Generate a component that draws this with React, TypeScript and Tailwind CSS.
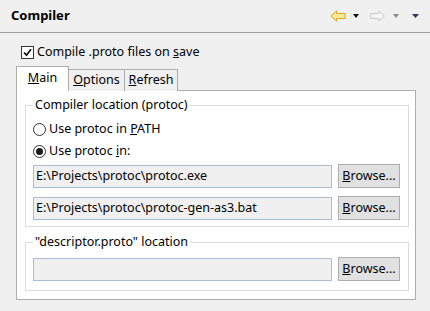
import React, { useState } from 'react';

const font = { fontFamily: '"Noto Sans", "Open Sans", Arial, sans-serif' };

const ArrowLeft: React.FC<{ active?: boolean }> = ({ active }) => (
  <svg width="16" height="12" viewBox="0 0 16 12">
    <polygon
      points="0.8,6 6.5,0.8 6.5,3.5 15.2,3.5 15.2,8.5 6.5,8.5 6.5,11.2"
      fill={active ? '#fdeb94' : '#f6f6f6'}
      stroke={active ? '#d9a520' : '#c4c4c4'}
      strokeWidth="1"
      strokeLinejoin="round"
    />
  </svg>
);

const ArrowRight: React.FC = () => (
  <svg width="15" height="12" viewBox="0 0 16 12">
    <polygon
      points="15.2,6 9.5,0.8 9.5,3.5 0.8,3.5 0.8,8.5 9.5,8.5 9.5,11.2"
      fill="#f6f6f6"
      stroke="#c4c4c4"
      strokeWidth="1"
      strokeLinejoin="round"
    />
  </svg>
);

const Tri: React.FC<{ color: string; w: number }> = ({ color, w }) => (
  <svg width={w} height="4" viewBox={`0 0 ${w} 4`}>
    <polygon points={`0,0 ${w},0 ${w / 2},4`} fill={color} />
  </svg>
);

const Radio: React.FC<{ checked: boolean }> = ({ checked }) => (
  <span className="flex h-[13px] w-[13px] items-center justify-center rounded-full border border-[#333] bg-white">
    {checked && <span className="h-[7px] w-[7px] rounded-full bg-[#1a1a1a]" />}
  </span>
);

const PathRow: React.FC<{ value: string }> = ({ value }) => (
  <div className="flex h-[24px] items-center">
    <div className="flex h-[23px] w-[299px] items-center border border-[#a8bdd1] bg-[#f0f0f0] pl-[2px] text-black">
      {value}
    </div>
    <button className="ml-[6px] h-[24px] w-[62px] border border-[#adadad] bg-[#e1e1e1] text-black">
      <span className="underline">B</span>rowse...
    </button>
  </div>
);

export default function App() {
  const [tab] = useState('main');

  return (
    <div className="h-[311px] w-[430px] overflow-hidden bg-[#f0f0f0] text-[12.5px] text-black" style={font}>
      {/* header */}
      <div className="flex h-[33px] items-center border-b border-[#a0a0a0] pl-[11px] pr-[11px]">
        <span className="text-[13px] font-bold">Compiler</span>
        <div className="ml-auto flex items-center">
          <ArrowLeft active />
          <span className="ml-[7px] flex">
            <Tri color="#111" w={6} />
          </span>
          <span className="ml-[11px] flex">
            <ArrowRight />
          </span>
          <span className="ml-[8px] flex">
            <Tri color="#8a8a8a" w={6} />
          </span>
          <span className="ml-[13px] flex">
            <Tri color="#3b2d5c" w={7} />
          </span>
        </div>
      </div>

      <div className="px-[16px]">
        {/* compile on save */}
        <div className="mt-[11px] flex h-[16px] items-center pl-[5px]">
          <span className="flex h-[13px] w-[13px] items-center justify-center border border-[#333] bg-white">
            <svg width="9" height="9" viewBox="0 0 9 9">
              <path d="M1 4.5 L3.5 7.2 L8 1.2" fill="none" stroke="#111" strokeWidth="1.7" />
            </svg>
          </span>
          <span className="ml-[3px]">
            Compile .proto files on <span className="underline">s</span>ave
          </span>
        </div>

        {/* tabs */}
        <div className="relative z-10 mt-[6px] flex items-end">
          <div
            className={`flex h-[25px] w-[53px] items-center justify-center border border-b-0 border-[#adadad] ${
              tab === 'main' ? 'bg-white' : 'bg-[#f0f0f0]'
            }`}
          >
            <span className="-mt-[1px]">
              <span className="underline">M</span>ain
            </span>
          </div>
          <div className="flex h-[22px] w-[56px] items-center justify-center border-t border-r border-[#adadad] bg-[#f0f0f0]">
            <span>
              <span className="underline">O</span>ptions
            </span>
          </div>
          <div className="flex h-[22px] w-[53px] items-center justify-center border-t border-r border-[#adadad] bg-[#f0f0f0]">
            <span>
              <span className="underline">R</span>efresh
            </span>
          </div>
        </div>

        {/* panel */}
        <div className="-mt-px h-[210px] w-[400px] border border-[#adadad] bg-white pl-[8px] pr-[6px] pt-[6px]">
          <fieldset className="border border-[#dcdcdc] pb-[6px] pl-[7px] pr-[8px]">
            <legend className="h-[16px] px-[2px] leading-[16px]">Compiler location (protoc)</legend>
            <div className="mt-[8px] flex h-[16px] items-center">
              <Radio checked={false} />
              <span className="ml-[3px]">
                Use protoc in <span className="underline">P</span>ATH
              </span>
            </div>
            <div className="mt-[6px] flex h-[16px] items-center">
              <Radio checked />
              <span className="ml-[3px]">
                Use protoc <span className="underline">i</span>n:
              </span>
            </div>
            <div className="mt-[5px]">
              <PathRow value="E:\Projects\protoc\protoc.exe" />
            </div>
            <div className="mt-[8px]">
              <PathRow value="E:\Projects\protoc\protoc-gen-as3.bat" />
            </div>
          </fieldset>

          <fieldset className="mt-[7px] border border-[#dcdcdc] pb-[9px] pl-[7px] pr-[8px]">
            <legend className="h-[16px] px-[2px] leading-[16px]">"descriptor.proto" location</legend>
            <div className="mt-[7px]">
              <PathRow value="" />
            </div>
          </fieldset>
        </div>
      </div>
    </div>
  );
}
